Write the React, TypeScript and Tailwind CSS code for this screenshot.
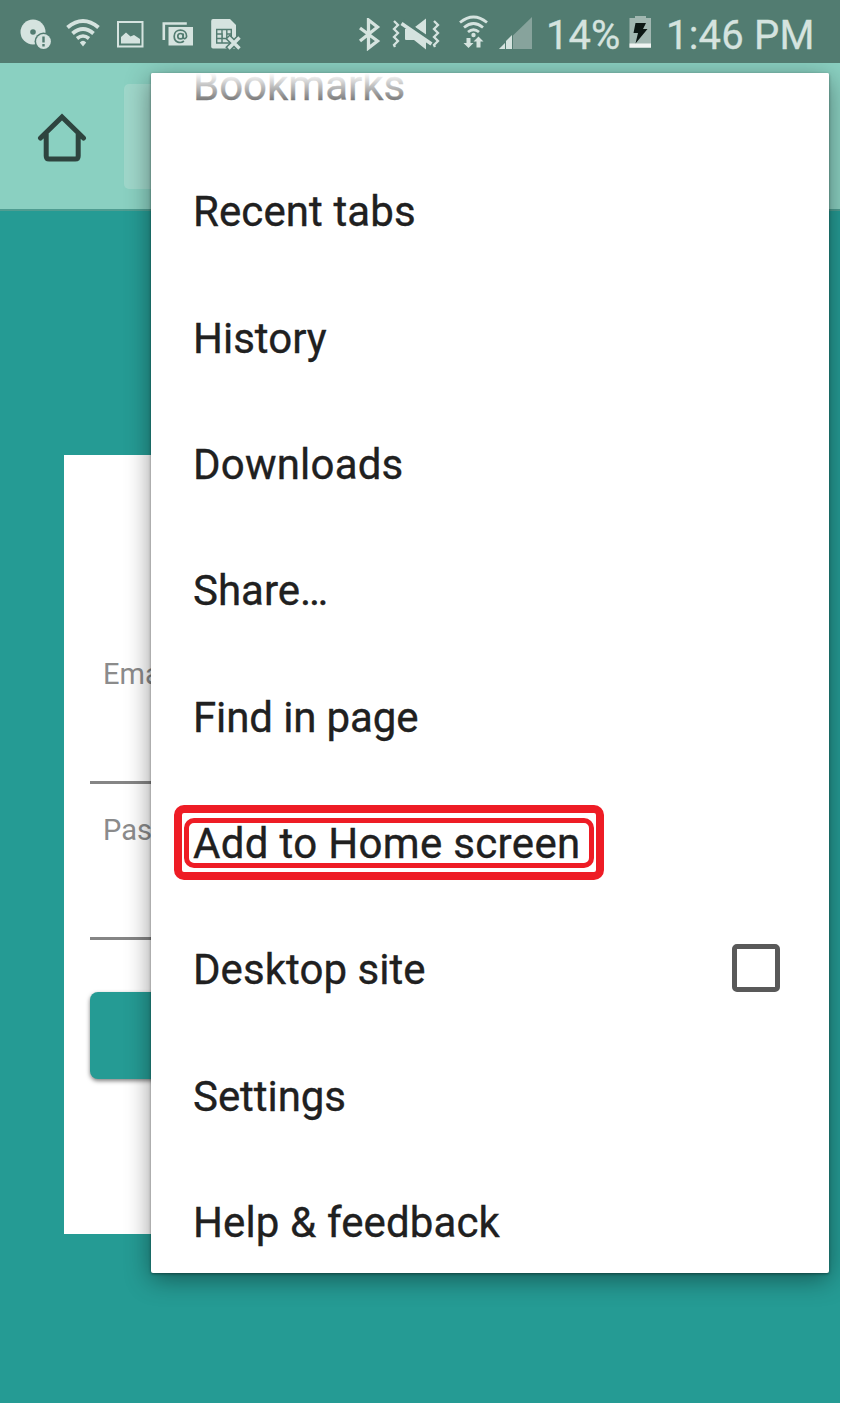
import type { ReactNode } from "react";

function Glyph({ box, className, children }: { box: string; className: string; children: ReactNode }) {
  return (
    <svg viewBox={box} className={className} fill="none" aria-hidden="true">
      {children}
    </svg>
  );
}

const ink = "#d5e3df";
const bar = "#527c71";

function StatusBar() {
  return (
    <header className="flex h-[63px] shrink-0 items-start bg-[#527c71] text-[#d5e3df]">
      <div className="flex pl-5">
        <Glyph box="20 18 32 32" className="mt-[18px] h-8 w-8">
          <circle cx="33" cy="32" r="12.5" fill={ink} />
          <circle cx="33" cy="32" r="2.8" fill={bar} />
          <circle cx="43.5" cy="41.5" r="9" fill={bar} />
          <circle cx="43.5" cy="41.5" r="7.4" fill={ink} />
          <path d="M43.5 36.5v6M43.5 44v2.4" stroke={bar} strokeWidth="2.4" />
        </Glyph>
        <Glyph box="66 18 34 29" className="ml-[14px] mt-[18px] h-[29px] w-[34px]">
          <path d="M67.5 27.500Q83 14.5 98.500 27.500M72.500 33.500Q83 24.500 93.500 33.500" stroke={ink} strokeWidth="4" />
          <path d="M77 38.500Q83 33.500 89 38.500" stroke={ink} strokeWidth="3.600" />
          <path d="M79.800 42.500Q83 39 86.200 42.500L83 46.500Z" fill={ink} />
        </Glyph>
        <Glyph box="116 20 28 28" className="ml-4 mt-5 h-7 w-7">
          <path d="M118 22h24.500v24.500H118z" stroke={ink} strokeWidth="2" />
          <path d="M121 43.500V37l5-4.500 4.500 4 3.500-1.500 6 4v4.500z" fill={ink} />
        </Glyph>
        <Glyph box="161 21 33 26" className="ml-[17px] mt-[21px] h-[26px] w-[33px]">
          <path d="M163.800 40V23.500h23" stroke={ink} strokeWidth="2.600" />
          <path d="M168.500 27H193v18.500h-24.500z" fill={ink} />
          <circle cx="180.500" cy="36.200" r="2.700" stroke={bar} strokeWidth="1.700" />
          <path d="M183.200 33.500v3.700c0 2.300 3.400 1.800 3.400-1 0-8-12.400-8-12.400 0 0 6.600 6.600 7.500 9.700 4.800" stroke={bar} strokeWidth="1.700" />
        </Glyph>
        <Glyph box="209 18 31 32" className="ml-4 mt-[18px] h-8 w-[31px]">
          <path d="M212 19h17l6 6v23.500h-23q-1.800 0-1.800-1.800V21q0-2 1.800-2z" fill={ink} />
          <path d="M215.700 29.500h14.600v13.500h-14.600zM215.700 34h5.500v4.500h-5.500M221 29.500v13.500M225.800 29.500v9M221 38.500h9M226 34h4" stroke={bar} strokeWidth="1.400" />
          <path d="M226.500 36.500l13 13M239.500 36.500l-13 13" stroke={bar} strokeWidth="6.500" />
          <path d="M227.500 37.500l11 11M238.500 37.500l-11 11" stroke={ink} strokeWidth="3.400" />
        </Glyph>
      </div>
      <div className="ml-[117px] flex">
        <Glyph box="358 18 23 33" className="mt-[18px] h-[33px] w-[23px]">
          <path d="M360 28l17.500 13-9 7V20l9 7L360 41" stroke={ink} strokeWidth="3.300" />
        </Glyph>
        <Glyph box="392 18 49 32" className="ml-[11px] mt-[18px] h-8 w-[49px]">
          <path d="M394 21l4 4-4 4 4 4-4 4 4 4-4 4 1 2M434 21l4 4-4 4 4 4-4 4 4 4-4 4 1 2" stroke={ink} strokeWidth="2.300" />
          <path d="M415 27l11-8.500v17z" fill={ink} />
          <path d="M405 29h6l15 10v10.500L414 40h-8q-1 0-1-1z" fill={ink} />
          <path d="M403 20l31 21" stroke={bar} strokeWidth="2" />
          <path d="M401.500 23.500l30 20.500" stroke={ink} strokeWidth="3.600" />
        </Glyph>
        <Glyph box="459 15 29 34" className="ml-[18px] mt-[15px] h-[34px] w-[29px]">
          <path d="M460 22.500Q473.500 11.500 487 22.500M464 27.500Q473.500 19.500 483 27.500M468 32Q473.500 27.500 479 32" stroke={ink} strokeWidth="2.800" />
          <circle cx="473.500" cy="35" r="2.200" fill={ink} />
          <path d="M466.500 38h4v5h3l-5 5-5-5h3zM476.500 47.500h4v-6h3l-5-5-5 5h3z" fill={ink} />
        </Glyph>
        <Glyph box="498 16 34 33" className="ml-[10px] mt-4 h-[33px] w-[34px]">
          <path d="M499 49l33-32v32z" fill="#87a39c" />
          <path d="M499 49l6-6v6zM506 49v-8l6-6v14z" fill={ink} />
          <path d="M505.500 42v7M512.500 35v14" stroke={bar} strokeWidth="1" />
        </Glyph>
      </div>
      <span className="ml-[14px] mt-3 w-[74px] whitespace-nowrap text-[40px] leading-[48px] [-webkit-text-stroke:0.3px]">14%</span>
      <Glyph box="629 15 23 34" className="ml-[9px] mt-[15px] h-[34px] w-[23px]">
        <path d="M635 16h11v2h5v30h-21.500V18h5.500z" fill="#a1b7b1" />
        <path d="M629.500 43.500H651v4h-21.500z" fill="#f0f4f2" />
        <path d="M635.500 23h10.500l-3 6h4.500l-12 14.500 2.500-10.500h-4.500z" fill="#0c1714" />
      </Glyph>
      <span className="ml-[14px] mt-3 whitespace-nowrap text-[40px] leading-[48px] tracking-[0.2px] [-webkit-text-stroke:0.3px]">1:46 PM</span>
    </header>
  );
}

const items = [
  { label: "Bookmarks", tracking: "tracking-[0px]" },
  { label: "Recent tabs", tracking: "tracking-[0.1px]" },
  { label: "History", tracking: "tracking-[0px]" },
  { label: "Downloads", tracking: "tracking-[0.2px]" },
  { label: "Share…", tracking: "tracking-[0px]" },
  { label: "Find in page", tracking: "tracking-[-0.12px]" },
  { label: "Add to Home screen", tracking: "tracking-[0.33px]" },
  { label: "Desktop site", tracking: "tracking-[0.05px]" },
  { label: "Settings", tracking: "tracking-[-0.05px]" },
  { label: "Help & feedback", tracking: "tracking-[0.13px]" },
];

function MenuItem({ label, tracking }: { label: string; tracking: string }) {
  return (
    <li className={`flex h-[126.3px] items-center justify-between pl-[42px] pr-[49px] ${tracking}`}>
      {label === "Add to Home screen" ? (
        <span className="-ml-[19px] flex h-[75px] w-[430px] items-center rounded-[10px] border-8 border-[#ee1c25] p-[2px]">
          <span className="flex h-[50px] w-[410px] items-center whitespace-nowrap rounded-[10px] border-[5px] border-[#ee1c25] pl-1 pt-[2px]">
            {label}
          </span>
        </span>
      ) : (
        <span className="whitespace-nowrap pt-[2px]">{label}</span>
      )}
      {label === "Desktop site" && (
        <span role="checkbox" aria-checked="false" className="mb-[2px] h-12 w-12 rounded-[5px] border-[5px] border-[#595959]" />
      )}
    </li>
  );
}

function Menu() {
  return (
    <div className="absolute left-[151px] top-[10px] h-[1200px] w-[678px] rounded-[2px] bg-white shadow-[0_1px_3px_rgba(0,0,0,0.4),0_6px_26px_rgba(0,0,0,0.42)]">
      <div className="relative h-full overflow-hidden rounded-[2px]">
        <ul className="-mt-[51px] text-[42px] leading-[50px] text-[#202020] [-webkit-text-stroke:0.35px]">
          {items.map((item) => (
            <MenuItem key={item.label} {...item} />
          ))}
        </ul>
        <div className="absolute inset-x-0 top-0 h-[46px] bg-linear-to-b from-white to-white/0" />
      </div>
    </div>
  );
}

function Field({ label }: { label: string }) {
  return (
    <div className="h-[156px]">
      <div className="h-[127px] border-b-[3px] border-[#858585] pl-[13px] text-[29px] leading-[34px] text-[#8b8b8b]">
        {label}
      </div>
    </div>
  );
}

export default function App() {
  return (
    <div className="h-[1403px] w-[842px] overflow-hidden bg-white font-['Roboto',sans-serif]">
      <div className="flex h-full w-[840px] flex-col">
        <StatusBar />
        <div className="relative flex min-h-0 flex-1 flex-col overflow-hidden bg-[#259b94]">
          <div className="flex h-[148px] shrink-0 items-start border-b-2 border-[#4f9d91] bg-[#8ad0c1] pl-[37px] pt-[21px]">
            <Glyph box="37 112 50 51" className="mt-[28px] h-[51px] w-[50px]">
              <path d="M40.500 138L62 117l21.500 21M46.200 134v22q0 3 3 3h26q3 0 3-3v-22" stroke="#2e443f" strokeWidth="5" strokeLinecap="round" strokeLinejoin="miter" />
            </Glyph>
            <div className="ml-[37px] h-[105px] w-[600px] rounded-[5px] bg-[#9fd7ca]" />
          </div>
          <main className="ml-[64px] mt-[244px] h-[779px] w-[712px] bg-white px-[26px] pt-[202px]">
            <Field label="Email" />
            <Field label="Password" />
            <button type="button" className="mt-[23px] h-[87px] w-full rounded-[8px] bg-[#259b94] shadow-[0_2px_4px_rgba(0,0,0,0.5)]" aria-label="Sign in" />
          </main>
          <Menu />
        </div>
      </div>
    </div>
  );
}
